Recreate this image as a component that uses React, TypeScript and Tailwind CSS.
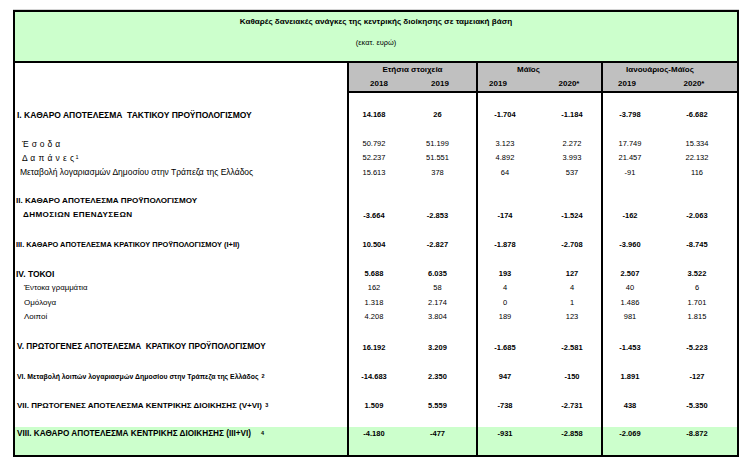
import React from "react";

type Row = {
  h: string;
  label?: React.ReactNode;
  pl?: string;
  fs?: string;
  bold?: boolean;
  vals?: string[];
  green?: boolean;
  tall?: boolean;
};

const Sup = ({ n }: { n: string }) => (
  <sup className="text-[5.5px] relative -top-[1px] align-top ml-[1px]">{n}</sup>
);

const rows: Row[] = [
  { h: "h-[15px]" },
  {
    h: "h-[14px]",
    label: "I. ΚΑΘΑΡΟ ΑΠΟΤΕΛΕΣΜΑ  ΤΑΚΤΙΚΟΥ ΠΡΟΫΠΟΛΟΓΙΣΜΟΥ",
    pl: "pl-[2px]",
    fs: "text-[8.5px]",
    bold: true,
    vals: ["14.168", "26", "-1.704", "-1.184", "-3.798", "-6.682"],
  },
  { h: "h-[15px]" },
  {
    h: "h-[14px]",
    label: "Έ σ ο δ α",
    pl: "pl-[7px]",
    fs: "text-[8.5px] tracking-[0.3px]",
    vals: ["50.792", "51.199", "3.123", "2.272", "17.749", "15.334"],
  },
  {
    h: "h-[14px]",
    label: (
      <>
        Δ α π ά ν ε ς<Sup n="1" />
      </>
    ),
    pl: "pl-[7px]",
    fs: "text-[8.5px] tracking-[0.4px]",
    vals: ["52.237", "51.551", "4.892", "3.993", "21.457", "22.132"],
  },
  {
    h: "h-[15px]",
    label: "Μεταβολή λογαριασμών Δημοσίου στην Τράπεζα της Ελλάδος",
    pl: "pl-[5px]",
    fs: "text-[8.5px]",
    vals: ["15.613", "378", "64", "537", "-91", "116"],
  },
  { h: "h-[14px]" },
  {
    h: "h-[14px]",
    label: "II. ΚΑΘΑΡΟ ΑΠΟΤΕΛΕΣΜΑ ΠΡΟΫΠΟΛΟΓΙΣΜΟΥ",
    pl: "pl-[1px]",
    fs: "text-[8.1px]",
    bold: true,
  },
  {
    h: "h-[15px]",
    label: "ΔΗΜΟΣΙΩΝ ΕΠΕΝΔΥΣΕΩΝ",
    pl: "pl-[8px]",
    fs: "text-[8.1px] tracking-[0.4px]",
    bold: true,
    vals: ["-3.664", "-2.853", "-174", "-1.524", "-162", "-2.063"],
  },
  { h: "h-[15px]" },
  {
    h: "h-[14px]",
    label: "III. ΚΑΘΑΡΟ ΑΠΟΤΕΛΕΣΜΑ ΚΡΑΤΙΚΟΥ ΠΡΟΫΠΟΛΟΓΙΣΜΟΥ (I+II)",
    pl: "pl-[1px]",
    fs: "text-[7.4px]",
    bold: true,
    vals: ["10.504", "-2.827", "-1.878", "-2.708", "-3.960", "-8.745"],
  },
  { h: "h-[15px]" },
  {
    h: "h-[14px]",
    label: "IV. ΤΟΚΟΙ",
    pl: "pl-[1px]",
    fs: "text-[8.5px]",
    bold: true,
    vals: ["5.688", "6.035", "193", "127", "2.507", "3.522"],
  },
  {
    h: "h-[14px]",
    label: "Έντοκα γραμμάτια",
    pl: "pl-[9px]",
    fs: "text-[7.8px]",
    vals: ["162", "58", "4", "4", "40", "6"],
  },
  {
    h: "h-[15px]",
    label: "Ομόλογα",
    pl: "pl-[9px]",
    fs: "text-[8px]",
    vals: ["1.318", "2.174", "0", "1", "1.486", "1.701"],
  },
  {
    h: "h-[14px]",
    label: "Λοιποί",
    pl: "pl-[9px]",
    fs: "text-[8px]",
    vals: ["4.208", "3.804", "189", "123", "981", "1.815"],
  },
  { h: "h-[16px]" },
  {
    h: "h-[15px]",
    label: "V. ΠΡΩΤΟΓΕΝΕΣ ΑΠΟΤΕΛΕΣΜΑ  ΚΡΑΤΙΚΟΥ ΠΡΟΫΠΟΛΟΓΙΣΜΟΥ",
    pl: "pl-[2px]",
    fs: "text-[8.2px]",
    bold: true,
    vals: ["16.192", "3.209", "-1.685", "-2.581", "-1.453", "-5.223"],
  },
  { h: "h-[15px]" },
  {
    h: "h-[14px]",
    label: (
      <>
        VI. Μεταβολή λοιπών λογαριασμών Δημοσίου στην Τράπεζα της Ελλάδος <Sup n="2" />
      </>
    ),
    pl: "pl-[2px]",
    fs: "text-[6.9px]",
    bold: true,
    vals: ["-14.683", "2.350", "947", "-150", "1.891", "-127"],
  },
  { h: "h-[15px]" },
  {
    h: "h-[14px]",
    label: (
      <>
        VII. ΠΡΩΤΟΓΕΝΕΣ ΑΠΟΤΕΛΕΣΜΑ ΚΕΝΤΡΙΚΗΣ ΔΙΟΙΚΗΣΗΣ (V+VI) <Sup n="3" />
      </>
    ),
    pl: "pl-[2px]",
    fs: "text-[8px]",
    bold: true,
    vals: ["1.509", "5.559", "-738", "-2.731", "438", "-5.350"],
  },
  { h: "h-[14px]" },
  {
    h: "h-[28px]",
    label: (
      <>
        VIII. ΚΑΘΑΡΟ ΑΠΟΤΕΛΕΣΜΑ ΚΕΝΤΡΙΚΗΣ ΔΙΟΙΚΗΣΗΣ (III+VI)    <Sup n="4" />
      </>
    ),
    pl: "pl-[2px]",
    fs: "text-[8.2px]",
    bold: true,
    green: true,
    tall: true,
    vals: ["-4.180", "-477", "-931", "-2.858", "-2.069", "-8.872"],
  },
];

function DataRow({ r }: { r: Row }) {
  const v = r.vals ?? ["", "", "", "", "", ""];
  const cell = r.tall ? "h-[14px] flex items-center" : "h-full flex items-center";
  return (
    <div
      className={`flex ${r.h} ${r.green ? "bg-[#ccffcc]" : ""} ${
        r.bold ? "font-bold" : ""
      }`}
    >
      <div className={`w-[334px] border-r-2 border-black ${r.pl ?? ""} ${r.fs ?? ""}`}>
        <div className={`${r.tall ? "h-[14px]" : "h-full"} flex items-center whitespace-pre`}>
          {r.label}
        </div>
      </div>
      <div className="w-[129px] border-r-2 border-black flex items-start">
        <div className={`w-[50px] justify-center ${cell}`}>{v[0]}</div>
        <div className={`w-[77px] justify-center ${cell}`}>{v[1]}</div>
      </div>
      <div className="w-[125px] border-r-2 border-black flex items-start">
        <div className={`w-[54px] justify-center ${cell}`}>{v[2]}</div>
        <div className={`w-[69px] pl-[11px] justify-center ${cell}`}>{v[3]}</div>
      </div>
      <div className="w-[134px] flex items-start">
        <div className={`w-[54px] justify-center ${cell}`}>{v[4]}</div>
        <div className={`w-[80px] justify-center ${cell}`}>{v[5]}</div>
      </div>
    </div>
  );
}

export default function App() {
  return (
    <div
      className="w-[750px] h-[461px] bg-white pt-[10px] pl-[13px] text-black text-[7.5px] leading-none"
      style={{ fontFamily: '"Liberation Sans", Arial, sans-serif' }}
    >
      <div className="w-[726px] border-2 border-black shadow-[0_-1px_0_#d4d4d4]">
        {/* Title band */}
        <div className="h-[51px] bg-[#ccffcc] border-b-2 border-black pt-[3px] flex flex-col items-center">
          <div className="h-[14px] flex items-center font-bold text-[8.1px]">
            Καθαρές δανειακές ανάγκες της κεντρικής διοίκησης σε ταμειακή βάση
          </div>
          <div className="h-[14px] mt-[7px] flex items-center text-[7.4px]">(εκατ. ευρώ)</div>
        </div>

        {/* Header */}
        <div className="flex h-[30px] font-bold text-[8px]">
          <div className="w-[334px] border-r-2 border-black" />
          <div className="w-[129px] border-r-2 border-black">
            <div className="bg-[#c0c0c0] border-b-2 border-black h-[30px]">
              <div className="h-[14px] flex items-center justify-center">Ετήσια στοιχεία</div>
              <div className="h-[14px] flex">
                <div className="w-[60px] flex items-center justify-center">2018</div>
                <div className="w-[67px] pr-[5px] flex items-center justify-center">2019</div>
              </div>
            </div>
          </div>
          <div className="w-[125px] border-r-2 border-black">
            <div className="bg-[#c0c0c0] border-b-2 border-black h-[30px]">
              <div className="h-[14px] pr-[22px] flex items-center justify-center">Μάϊος</div>
              <div className="h-[14px] flex">
                <div className="w-[40px] flex items-center justify-center">2019</div>
                <div className="w-[83px] pl-[19px] flex items-center justify-center">2020*</div>
              </div>
            </div>
          </div>
          <div className="w-[134px]">
            <div className="bg-[#c0c0c0] border-b-2 border-black h-[30px]">
              <div className="h-[14px] pr-[20px] flex items-center justify-center">Ιανουάριος-Μάϊος</div>
              <div className="h-[14px] flex">
                <div className="w-[48px] flex items-center justify-center">2019</div>
                <div className="w-[86px] flex items-center justify-center">2020*</div>
              </div>
            </div>
          </div>
        </div>

        {/* Body */}
        {rows.map((r, i) => (
          <DataRow key={i} r={r} />
        ))}
      </div>
    </div>
  );
}
